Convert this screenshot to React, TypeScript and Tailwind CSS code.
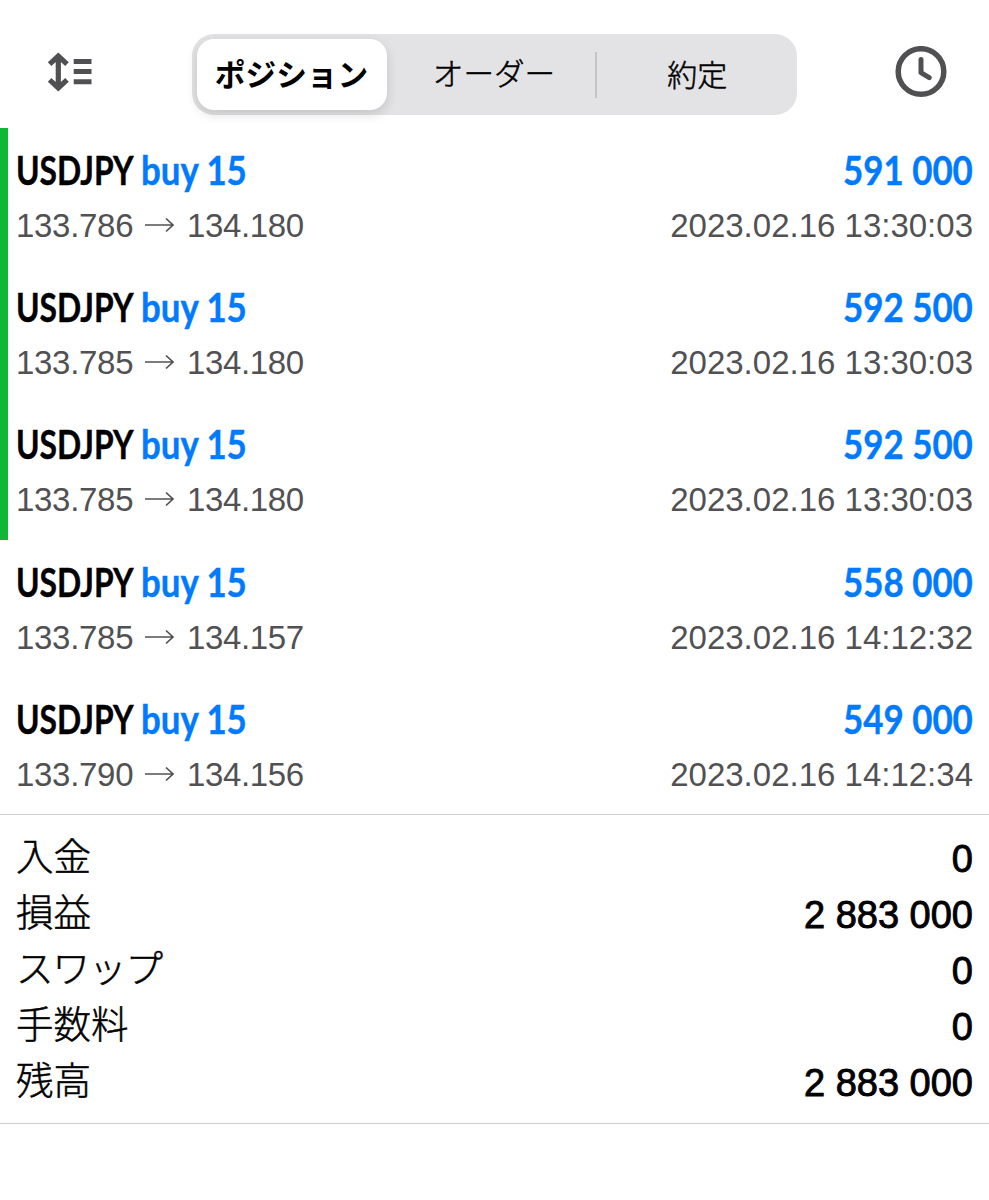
import { clsx } from 'clsx';

interface Position {
  symbol: string;
  side: string;
  open: string;
  current: string;
  profit: string;
  time: string;
  marked: boolean;
}

interface TotalRow {
  label: string;
  value: string;
  kana?: boolean;
}

const positions: Position[] = [
  { symbol: 'USDJPY', side: 'buy 15', open: '133.786', current: '134.180', profit: '591 000', time: '2023.02.16 13:30:03', marked: true },
  { symbol: 'USDJPY', side: 'buy 15', open: '133.785', current: '134.180', profit: '592 500', time: '2023.02.16 13:30:03', marked: true },
  { symbol: 'USDJPY', side: 'buy 15', open: '133.785', current: '134.180', profit: '592 500', time: '2023.02.16 13:30:03', marked: true },
  { symbol: 'USDJPY', side: 'buy 15', open: '133.785', current: '134.157', profit: '558 000', time: '2023.02.16 14:12:32', marked: false },
  { symbol: 'USDJPY', side: 'buy 15', open: '133.790', current: '134.156', profit: '549 000', time: '2023.02.16 14:12:34', marked: false },
];

const totals: TotalRow[] = [
  { label: '入金', value: '0' },
  { label: '損益', value: '2 883 000' },
  { label: 'スワップ', value: '0', kana: true },
  { label: '手数料', value: '0' },
  { label: '残高', value: '2 883 000' },
];

function SortIcon() {
  return (
    <svg className="h-[42px] w-[48px]" viewBox="0 0 48 42" fill="none" stroke="#505052">
      <path d="M12.3 5v32M3.6 13.2l8.7-8.2 8.7 8.2M3.6 28.8l8.7 8.2 8.7-8.2" strokeWidth="5.2" />
      <path d="M27.7 10.4h17.8M27.7 20.6h17.8M27.7 30.8h17.8" strokeWidth="5" />
    </svg>
  );
}

function ClockIcon() {
  return (
    <svg className="h-[52px] w-[52px]" viewBox="0 0 52 52" fill="none" stroke="#505052">
      <circle cx="26" cy="25.5" r="22.8" strokeWidth="5.5" />
      <path d="M26 13.5v13.2l8.2 4.9" strokeWidth="5" strokeLinecap="round" strokeLinejoin="round" />
    </svg>
  );
}

function Header() {
  return (
    <header className="flex h-32 items-start justify-between pr-[42.5px] pl-[46px]">
      <button className="mt-[51px]">
        <SortIcon />
      </button>
      <div className="mt-[34px] flex h-[81px] w-[605.5px] items-center rounded-[22px] bg-[#e3e3e5] p-[5px] font-['Liberation_Sans','Noto_Sans_CJK_JP',sans-serif] text-[30px] text-black">
        <button className="h-[71px] w-[190px] rounded-[17px] bg-white pt-[3px] text-[30.7px] font-bold whitespace-nowrap shadow-[0_4px_12px_rgba(0,0,0,0.14)]">
          ポジション
        </button>
        <button className="w-[208px] pt-px pl-[7px] text-[30.6px] font-light [-webkit-text-stroke:0.5px_black]">オーダー</button>
        <span className="h-[46px] w-[2px] bg-[#c5c5c8]" />
        <button className="flex-1 pt-px pl-[6px] font-light [-webkit-text-stroke:0.5px_black]">約定</button>
      </div>
      <button className="mt-[46px]">
        <ClockIcon />
      </button>
    </header>
  );
}

function PositionRow({ position }: { position: Position }) {
  return (
    <li
      className={clsx(
        'h-[137.2px] border-l-8 pt-[18px] pr-4 pl-2',
        position.marked ? 'border-[#10b636]' : 'border-transparent',
      )}
    >
      <div className="flex h-12 items-center justify-between font-['Lato',sans-serif] text-[40.5px] leading-[48px] font-bold whitespace-nowrap">
        <div className="flex">
          <span className="w-[125px] origin-left scale-x-[0.785] text-black [-webkit-text-stroke:0.4px_black]">
            {position.symbol}
          </span>
          <span className="origin-left scale-x-[0.86] text-[#007aff] [-webkit-text-stroke:0.4px_#007aff]">{position.side}</span>
        </div>
        <span className="origin-right scale-x-[0.86] text-[#007aff] [-webkit-text-stroke:0.4px_#007aff]">{position.profit}</span>
      </div>
      <div className="mt-[12px] flex justify-between text-[33px] leading-10 text-[#515154]">
        <div className="flex items-center">
          <span className="w-[118px] tracking-[-0.3px]">{position.open}</span>
          <svg className="mr-[8px] ml-[9px] h-5 w-[36px]" viewBox="0 0 36 20" fill="none" stroke="currentColor" strokeWidth="1.7">
            <path d="M2 9h28M23 2.5l7 6.5-7 6.5" />
          </svg>
          <span className="tracking-[-0.35px]">{position.current}</span>
        </div>
        <span>{position.time}</span>
      </div>
    </li>
  );
}

export default function App() {
  return (
    <div className="h-[1200px] w-[989px] overflow-hidden bg-white font-['Liberation_Sans','Noto_Sans_CJK_JP',sans-serif]">
      <Header />
      <ul>
        {positions.map((position, index) => (
          <PositionRow key={index} position={position} />
        ))}
      </ul>
      <dl className="h-[310px] border-y border-[#cfcfd1] px-4 pt-[14px] text-black">
        {totals.map((row) => (
          <div key={row.label} className="flex h-14 items-center justify-between">
            <dt
              className={clsx(
                'text-[37.5px] leading-[56px] font-light [-webkit-text-stroke:0.5px_black]',
                row.kana && 'tracking-[-1px]',
              )}
            >
              {row.label}
            </dt>
            <dd className="pt-[5px] text-[38px] leading-[53px] [-webkit-text-stroke:0.9px_black]">{row.value}</dd>
          </div>
        ))}
      </dl>
    </div>
  );
}
